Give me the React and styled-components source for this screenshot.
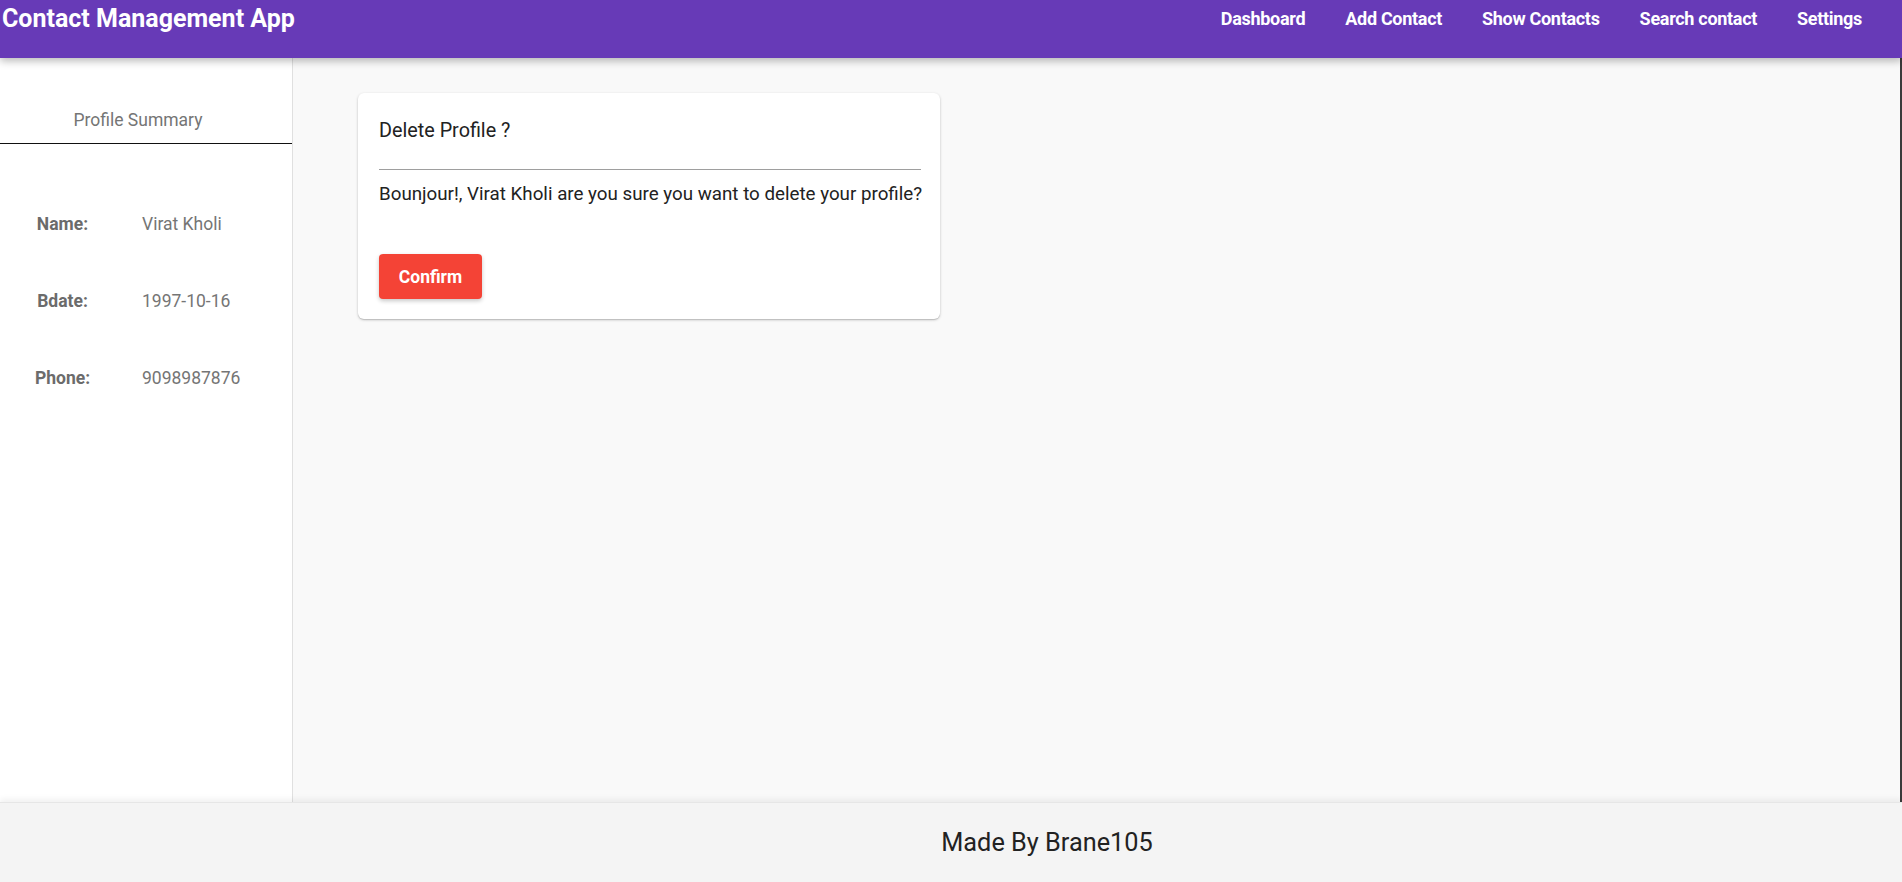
import React from 'react';
import styled, { createGlobalStyle } from 'styled-components';

const GlobalStyle = createGlobalStyle`
  html, body {
    margin: 0;
    padding: 0;
    height: 100%;
    overflow: hidden;
    font-family: Roboto, "Liberation Sans", sans-serif;
  }
  #root {
    height: 100%;
  }
`;

const links = ['Dashboard', 'Add Contact', 'Show Contacts', 'Search contact', 'Settings'];

const profile = [
  { label: 'Name:', value: 'Virat Kholi' },
  { label: 'Bdate:', value: '1997-10-16' },
  { label: 'Phone:', value: '9098987876' },
];

const Page = styled.div`
  display: flex;
  flex-direction: column;
  height: 100vh;
`;

const Header = styled.header`
  position: relative;
  z-index: 2;
  flex: 0 0 58px;
  display: flex;
  justify-content: space-between;
  align-items: flex-start;
  background: #673ab7;
  box-shadow: 0 3px 8px rgba(0, 0, 0, 0.28);
`;

const Brand = styled.div`
  padding: 7px 0 0 2px;
  font-size: 25px;
  line-height: 24px;
  font-weight: 700;
  color: #fff;
`;

const NavList = styled.nav`
  display: flex;
  padding: 7px 40px 0 0;
`;

const NavLink = styled.a`
  padding: 0 20px;
  font-size: 18px;
  line-height: 24px;
  font-weight: 700;
  color: #fff;
  text-decoration: none;
  letter-spacing: -0.3px;
  &:last-child {
    padding-right: 0;
  }
`;

const Body = styled.div`
  flex: 1;
  display: flex;
  min-height: 0;
`;

const Sidebar = styled.aside`
  flex: 0 0 292px;
  background: #fff;
  border-right: 1px solid #e0e0e0;
`;

const SideTitle = styled.div`
  padding: 50px 16px 11px 0;
  text-align: center;
  font-size: 17.5px;
  line-height: 24px;
  color: #757575;
  border-bottom: 1px solid #111;
`;

const InfoGrid = styled.div`
  display: grid;
  grid-template-columns: 125px 1fr;
  column-gap: 17px;
  row-gap: 53px;
  padding-top: 68px;
  font-size: 17.5px;
  line-height: 24px;
`;

const Label = styled.div`
  text-align: center;
  font-weight: 700;
  color: #6b6b6b;
`;

const Value = styled.div`
  color: #757575;
`;

const Main = styled.main`
  flex: 1;
  background: #f9f9f9;
  border-right: 2px solid #3a3a3a;
  padding: 35px 0 0 65px;
`;

const Card = styled.div`
  width: 582px;
  box-sizing: border-box;
  padding: 26px 19px 20px 21px;
  background: #fff;
  border-radius: 6px;
  box-shadow: 0 1px 3px rgba(0, 0, 0, 0.2), 0 1px 1px rgba(0, 0, 0, 0.12);
`;

const CardTitle = styled.div`
  font-size: 19.8px;
  line-height: 24px;
  color: #222;
`;

const Rule = styled.hr`
  margin: 26px 0 0;
  border: 0;
  border-top: 1px solid #9e9e9e;
`;

const Message = styled.p`
  margin: 12px 0 0;
  font-size: 18.75px;
  line-height: 24px;
  color: #222;
  white-space: nowrap;
`;

const Button = styled.button`
  display: block;
  margin-top: 48px;
  width: 103px;
  height: 45px;
  border: 0;
  border-radius: 4px;
  background: #f44336;
  color: #fff;
  font-family: inherit;
  font-size: 17.5px;
  font-weight: 700;
  box-shadow: 0 2px 4px rgba(0, 0, 0, 0.22);
  cursor: pointer;
`;

const Footer = styled.footer`
  position: relative;
  flex: 0 0 79px;
  display: flex;
  align-items: center;
  justify-content: center;
  padding-left: 192px;
  background: #f4f4f4;
  box-shadow: 0 -3px 6px rgba(0, 0, 0, 0.06);
  border-top: 1px solid #e6e6e6;
  font-size: 25.3px;
  color: #222;
`;

export default function App() {
  return (
    <Page>
      <GlobalStyle />
      <Header>
        <Brand>Contact Management App</Brand>
        <NavList>
          {links.map(l => <NavLink key={l} href="#">{l}</NavLink>)}
        </NavList>
      </Header>
      <Body>
        <Sidebar>
          <SideTitle>Profile Summary</SideTitle>
          <InfoGrid>
            {profile.map(p => (
              <React.Fragment key={p.label}>
                <Label>{p.label}</Label>
                <Value>{p.value}</Value>
              </React.Fragment>
            ))}
          </InfoGrid>
        </Sidebar>
        <Main>
          <Card>
            <CardTitle>Delete Profile ?</CardTitle>
            <Rule />
            <Message>Bounjour!, Virat Kholi are you sure you want to delete your profile?</Message>
            <Button>Confirm</Button>
          </Card>
        </Main>
      </Body>
      <Footer>Made By Brane105</Footer>
    </Page>
  );
}
